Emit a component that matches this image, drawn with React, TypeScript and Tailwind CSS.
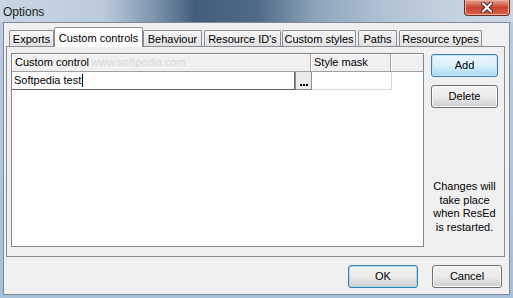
import React from 'react';

type TabProps = { label: string; width: string; active?: boolean; gap?: string };

const Tab = ({ label, width, active, gap }: TabProps) => {
  if (active) {
    return (
      <div
        className={`relative z-10 -mb-px flex h-[20px] items-start justify-center rounded-t-[2px] border border-b-0 border-[#898c95] bg-white pt-[2px] ${width} ${gap ?? ''}`}
      >
        {label}
      </div>
    );
  }
  return (
    <div
      className={`flex h-[16px] items-center justify-center rounded-t-[2px] border border-b-0 border-[#898c95] bg-gradient-to-b from-[#f6f6f6] to-[#e2e2e2] pt-px ${width} ${gap ?? ''}`}
    >
      {label}
    </div>
  );
};

const GrayButton = ({ label, tone }: { label: string; tone: 'plain' | 'focus' | 'default' }) => {
  const look =
    tone === 'focus'
      ? 'border-[#3c7fb1] bg-gradient-to-b from-[#eaf6fd] via-[#d9f0fc] to-[#a7d9f5] shadow-[inset_0_0_0_1px_#c4e5f6]'
      : tone === 'default'
        ? 'border-[#3c7fb1] bg-gradient-to-b from-[#f2f2f2] via-[#ebebeb] to-[#cfcfcf] shadow-[inset_0_0_0_1px_#a6d8f2]'
        : 'border-[#707070] bg-gradient-to-b from-[#f2f2f2] via-[#ebebeb] to-[#cfcfcf] shadow-[inset_0_0_0_1px_#fcfcfc]';
  return (
    <div className={`flex h-[23px] items-center justify-center rounded-[3px] border ${look}`}>
      {label}
    </div>
  );
};

export default function App() {
  return (
    <div className="flex h-[298px] w-[513px] flex-col overflow-hidden bg-gradient-to-b from-[#b9cde0] to-[#a6c0da] font-['Liberation_Sans',Arial,sans-serif] text-[11px] text-black">
      {/* title bar */}
      <div className="flex h-[22px] items-start justify-between bg-[linear-gradient(90deg,#c9d7e5_0%,#bccbda_20%,#7d95ae_30%,#435e7c_38%,#4f6a87_50%,#90a6bc_62%,#b1c2d3_75%,#c4d2df_88%,#cbd8e4_100%)]">
        <span className="pl-[3px] pt-[3px] text-[12px] text-[#1b1b1b]">Options</span>
        <div className="mr-[3px] flex h-[16px] w-[46px] items-center justify-center rounded-b-[4px] border border-t-0 border-[#6e2a20] bg-gradient-to-b from-[#e6a594] via-[#c8442e] to-[#d8644a] shadow-[inset_0_0_0_1px_#eab0a3]">
          <svg width="12" height="11" viewBox="0 0 12 11">
            <path d="M2 1.5 L10 9.5 M10 1.5 L2 9.5" stroke="#5a1c14" strokeWidth="4" strokeLinecap="round" />
            <path d="M2 1.5 L10 9.5 M10 1.5 L2 9.5" stroke="#ffffff" strokeWidth="2.2" strokeLinecap="round" />
          </svg>
        </div>
      </div>

      {/* client area */}
      <div className="ml-[3px] mr-[3px] mb-[3px] flex h-[273px] w-[507px] flex-col border border-[#7f8b98] bg-[#f0f0f0] pt-[4px]">
        {/* tabs */}
        <div className="flex h-[19px] items-end pl-[5px]">
          <Tab label="Exports" width="w-[45px]" />
          <Tab label="Custom controls" width="w-[89px]" active />
          <Tab label="Behaviour" width="w-[59px]" gap="mr-[2px]" />
          <Tab label="Resource ID's" width="w-[77px]" gap="mr-[1px]" />
          <Tab label="Custom styles" width="w-[74px]" gap="mr-[2px]" />
          <Tab label="Paths" width="w-[39px]" gap="mr-[2px]" />
          <Tab label="Resource types" width="w-[83px]" />
        </div>

        {/* tab panel */}
        <div className="ml-[2px] flex h-[211px] w-[499px] border border-[#898c95] bg-[#f0f0f0] pl-[4px] pt-[6px]">
          {/* list view */}
          <div className="flex h-[194px] w-[413px] flex-col border border-[#828790] bg-white">
            <div className="flex h-[18px] border-b border-[#a0a0a0] bg-[#f0f0f0]">
              <div className="flex w-[299px] items-center border-r border-[#a0a0a0] pl-[3px] shadow-[inset_1px_1px_0_#ffffff]">
                Custom control
                <span className="ml-[2px] text-[#dadada]">www.softpedia.com</span>
              </div>
              <div className="flex w-[80px] items-center border-r border-[#a0a0a0] pl-[3px] shadow-[inset_1px_1px_0_#ffffff]">
                Style mask
              </div>
              <div className="flex-1 shadow-[inset_1px_1px_0_#ffffff]" />
            </div>
            <div className="flex h-[18px]">
              <div className="flex w-[283px] items-center border-b border-r border-[#646464] pl-[2px]">
                Softpedia test
                <span className="ml-px h-[13px] w-px bg-black" />
              </div>
              <div className="flex w-[17px] items-end justify-center border border-t-0 border-[#8d8d8d] bg-[#ececec] pb-[3px]">
                <div className="flex gap-px">
                  <span className="h-[2px] w-[2px] bg-black" />
                  <span className="h-[2px] w-[2px] bg-black" />
                  <span className="h-[2px] w-[2px] bg-black" />
                </div>
              </div>
              <div className="w-[80px] border-b border-r border-[#d5d5d5]" />
            </div>
          </div>

          {/* right column */}
          <div className="ml-[7px] flex w-[67px] flex-col pt-px">
            <GrayButton label="Add" tone="focus" />
            <div className="mt-[8px]">
              <GrayButton label="Delete" tone="plain" />
            </div>
            <div className="mt-auto mb-[22px] ml-[-4px] mr-[-4px] text-center leading-[13.4px]">
              Changes will
              <br />
              take place
              <br />
              when ResEd
              <br />
              is restarted.
            </div>
          </div>
        </div>

        {/* dialog buttons */}
        <div className="mt-[8px] flex justify-end gap-[14px] pr-[7px]">
          <div className="w-[70px]">
            <GrayButton label="OK" tone="default" />
          </div>
          <div className="w-[70px]">
            <GrayButton label="Cancel" tone="plain" />
          </div>
        </div>
      </div>
    </div>
  );
}
